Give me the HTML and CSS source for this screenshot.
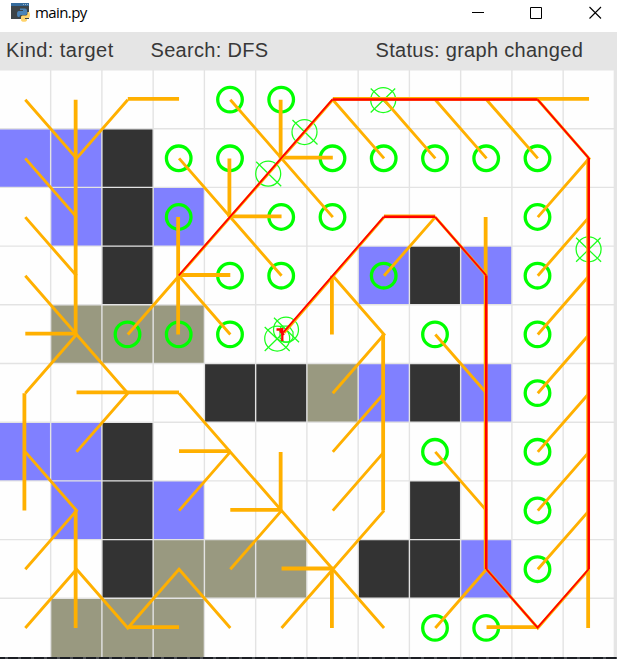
FILE: index.html
```html
<!DOCTYPE html>
<html lang="en">
<head>
<meta charset="utf-8">
<title>main.py</title>
<link rel="stylesheet" href="styles.css">
</head>
<body>
<div class="window">
  <header class="titlebar">
    <svg class="app-icon" viewBox="0 0 19 19" width="19" height="19">
      <path fill="#3d4448" d="M0 0h18v16H0z"/>
      <path fill="#356b9c" d="M0 0h18v3H0z"/>
      <path fill="#9ab4c8" d="M12 1h1v1h-1zM14 1h1v1h-1zM16 1h1v1h-1z"/>
      <path fill="#4a83b7" d="M9 5.500h5q2 0 2 2v3q0 1.500-2 1.500h-4q-1.500 0-1.500 2H7.500q-1.500 0-1.500-3t2-3h4V7H9z"/>
      <path fill="#ffd36b" d="M16.500 9h1.500q1 0 1 3t-1.500 3h-3.500v1h2v1q0 1.800-3 1.800t-3-1.800v-3q0-1.500 1.500-1.500h3.500q1.500 0 1.500-2z"/>
    </svg>
    <span class="title">main.py</span>
    <svg class="controls" viewBox="0 0 130 14" width="130" height="14">
      <path d="M0 6.500h12M58.500 1.500h11v11h-11z"/>
      <path class="close" d="M117.500 1l11.500 11.500M129 1l-11.500 11.500"/>
    </svg>
  </header>
  <div class="infobar">
    <span class="kind">Kind: target</span>
    <span class="search">Search: DFS</span>
    <span class="status">Status: graph changed</span>
  </div>
  <svg class="board" viewBox="0 70 617 587" width="617" height="587">
    <path class="bg" d="M0 70.600H613.700V657H0z"/>
    <g transform="translate(-.6 70) scale(51.25 58.7)">
      <path class="blue" d="M0 1h2v1H0zM1 2h1v1H1zM3 2h1v1H3zM7 3h1v1H7zM9 3h1v1H9zM7 5h1v1H7zM9 5h1v1H9zM0 6h2v1H0zM1 7h1v1H1zM3 7h1v1H3zM9 8h1v1H9z"/>
      <path class="wall" d="M2 1h1v3H2zM8 3h1v1H8zM4 5h2v1H4zM8 5h1v1H8zM2 6h1v3H2zM8 7h1v2H7V8h1z"/>
      <path class="olive" d="M1 4h3v1H1zM6 5h1v1H6zM3 8h3v1H3zM1 9h3v1H1z"/>
      <path class="lines" d="M1 0v10M2 0v10M3 0v10M4 0v10M5 0v10M6 0v10M7 0v10M8 0v10M9 0v10M10 0v10M11 0v10M0 1h12M0 2h12M0 3h12M0 4h12M0 5h12M0 6h12M0 7h12M0 8h12M0 9h12"/>
    </g>
    <defs><circle id="node" r="12.300"/>
      <g id="target"><circle r="12.500"/><path d="M-12.500-11.500l25 24M-12.500 12.500l24.500-24"/></g>
      <g id="target-half"><circle r="12.500"/><path d="M-12-12l25 24.500"/></g>
    </defs>
    <g class="nodes">
      <use href="#node" x="230" y="99.600"/><use href="#node" x="281.200" y="99.600"/>
      <use href="#node" x="178.700" y="158.300"/><use href="#node" x="230" y="158.300"/><use href="#node" x="332.500" y="158.300"/><use href="#node" x="383.700" y="158.300"/><use href="#node" x="435" y="158.300"/><use href="#node" x="486.200" y="158.300"/><use href="#node" x="537.500" y="158.300"/>
      <use href="#node" x="178.700" y="217"/><use href="#node" x="281.200" y="217"/><use href="#node" x="332.500" y="217"/><use href="#node" x="537.500" y="217"/>
      <use href="#node" x="230" y="275.700"/><use href="#node" x="281.200" y="275.700"/><use href="#node" x="383.700" y="275.700"/><use href="#node" x="537.500" y="275.700"/>
      <use href="#node" x="127.500" y="334.400"/><use href="#node" x="178.700" y="334.400"/><use href="#node" x="230" y="334.400"/><use href="#node" x="435" y="334.400"/><use href="#node" x="537.500" y="334.400"/>
      <use href="#node" x="537.500" y="393.100"/><use href="#node" x="435" y="451.800"/><use href="#node" x="537.500" y="451.800"/><use href="#node" x="537.500" y="510.500"/><use href="#node" x="537.500" y="569.200"/><use href="#node" x="435" y="627.900"/><use href="#node" x="486.200" y="627.900"/>
    </g>
    <g class="targets">
      <use href="#target" x="383.200" y="100"/><use href="#target-half" x="304.500" y="132"/><use href="#target-half" x="268.200" y="173.700"/><use href="#target" x="588.600" y="249.300"/><use href="#target-half" x="286" y="329.700"/><use href="#target" x="277.200" y="338.500"/>
      <path d="M281 326h8l4 6v6l-3 4h-6l-4-4v-8z"/>
    </g>
    <g transform="translate(25.3 99.7) scale(51.25 58.7)">
      <path class="edge diagonal" d="M0 0L1 1L2 0M0 1L1 2M0 2L1 3M0 3L1 4L0 5M1 4L2 5L1 6M3 5L6 8M0 6L1 7L0 8M0 9L1 8L2 9L3 8L4 9M4 6L3 7M5 7L4 8M5 9L7 7M6 8L7 9M6 3L7 4L6 5M7 5L6 6M7 6L6 7M4 0L6 2M3 1L5 3M2 4L6 0M3 3L4 4M6 0L7 1M7 0L8 1M8 0L9 1M9 0L10 1M10 0L11 1L10 2M11 2L10 3M11 3L10 4M11 4L10 5M11 5L10 6M11 6L10 7M11 7L10 8M11 8L10 9L9 8L8 9M8 2L9 3M7 2L5.050 3.970M8 2L7 3M8 4L9 5M8 6L9 7"/>
    </g>
    <g transform="translate(24.4 99.7) scale(51.25 58.7)">
      <path class="edge straight" d="M1 0V4M0 5V7M1 7V9M5 6V7M6 8V9M7 4V7M6 3V4M5 0V1M4 1V2M3 2V4M11 1V9M9 2V8"/>
    </g>
    <g transform="translate(25.3 98.9) scale(51.25 58.7)">
      <path class="edge straight" d="M2 0H3M0 4H1M1 5H3M3 6H4M2 9H3M4 7H5M5 8H6M5 1H6M4 2H5M3 3H4M6 0H11M9 9H10M7 2H8"/>
    </g>
    <g transform="translate(25 99.4) scale(51.25 58.7)">
      <path class="route diagonal" d="M3 3L6 0M10 0L11 1M11 8L10 9L9 8M9 3L8 2M7 2L5.040 3.970"/>
      <path class="route straight" d="M6 0H10M11 1V8M9 8V3M8 2H7"/>
    </g>
    <path class="arrow" d="M276.500 329.500H283M282.300 328V341M280 331l4 4"/>
  </svg>
  <footer class="edge-strip"></footer>
</div>
</body>
</html>
```
FILE: styles.css
```css
body {
  margin: 0;
  background: #fff;
  overflow: hidden;
}
.window {
  width: 617px;
  height: 659px;
  display: flex;
  flex-direction: column;
}
.titlebar {
  height: 32px;
  box-sizing: border-box;
  padding: 3px 15px 0 11px;
  display: flex;
  align-items: flex-start;
}
.title {
  margin: -1px 0 0 5px;
  font: 15px/20px "Open Sans", "Noto Sans", sans-serif;
  letter-spacing: -0.600px;
  color: #000;
}
.controls {
  margin: 3px 0 0 auto;
  fill: none;
  stroke: #000;
}
.close {
  stroke-width: 1.1;
}
.infobar {
  height: 38px;
  background: #e5e5e5;
  padding-left: 6px;
  display: grid;
  grid-template-columns: 144.500px 225px auto;
  font: 20px/36px "Liberation Sans", Arial, sans-serif;
  color: #383838;
  white-space: nowrap;
}
.kind {
  letter-spacing: 0.450px;
}
.search {
  letter-spacing: 0.300px;
}
.status {
  letter-spacing: 0.300px;
}
.board {
  display: block;
  background: #e5e5e5;
}
.board path {
  vector-effect: non-scaling-stroke;
}
.bg { fill: #fefefe; }
.blue { fill: #8080ff; }
.wall { fill: #333; }
.olive { fill: #999980; }
.lines {
  fill: none;
  stroke: #e3e3e3;
  stroke-width: 1.400;
}
.nodes {
  fill: none;
  stroke: #0f0;
  stroke-width: 3.300;
}
.targets {
  fill: none;
  stroke: #1cff1c;
  stroke-width: 1.250;
}
.edge {
  fill: none;
  stroke: #ffb000;
}
.edge.diagonal { stroke-width: 2.900; }
.edge.straight { stroke-width: 3.800; }
.route {
  fill: none;
  stroke: #f00;
}
.route.diagonal { stroke-width: 1.800; }
.route.straight { stroke-width: 2.500; }
.arrow {
  fill: none;
  stroke: #f00;
  stroke-width: 2.300;
}
.edge-strip {
  height: 2px;
  background: repeating-linear-gradient(90deg, #1b1e24 0 5px, #4a4d52 5px 8px, #1b1e24 8px 13px);
}
```
